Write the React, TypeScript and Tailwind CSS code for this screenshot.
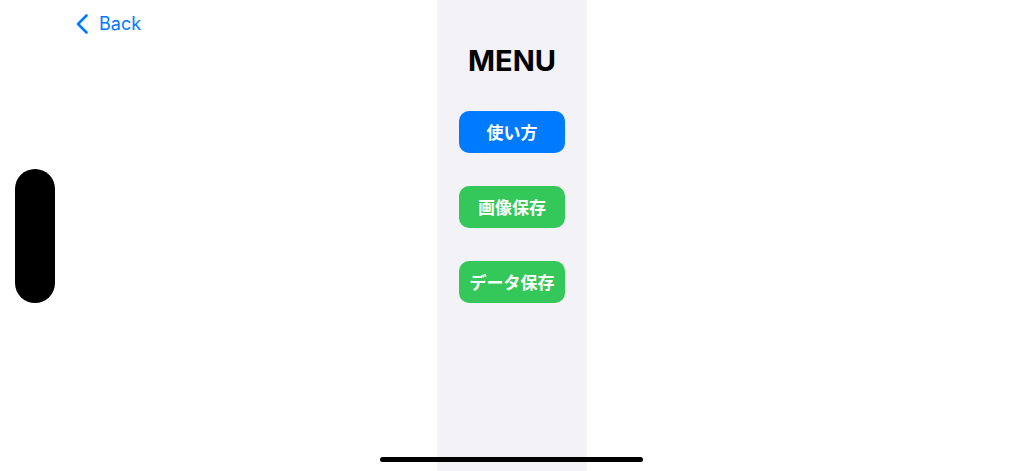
const items = [
  { label: "使い方", color: "bg-[#007aff]" },
  { label: "画像保存", color: "bg-[#34c759]" },
  { label: "データ保存", color: "bg-[#34c759]" },
];

export default function App() {
  return (
    <div className="relative flex h-[471px] w-full overflow-hidden bg-white font-['Inter','Noto_Sans_CJK_JP',sans-serif]">
      {/* left side */}
      <div className="relative flex w-[437px] shrink-0 items-center pl-[15px]">
        <button className="absolute left-[75px] top-[12px] flex items-center gap-[10px] text-[18px] leading-[24px] text-[#007aff]">
          <svg width="14" height="22" viewBox="0 0 14 22" fill="none">
            <path d="M11.5 2.5 L3 11 L11.5 19.5" stroke="currentColor" strokeWidth="2.6" strokeLinecap="round" strokeLinejoin="round" />
          </svg>
          <span>Back</span>
        </button>
        <div className="h-[134px] w-[40px] rounded-full bg-black" />
      </div>

      {/* menu panel */}
      <div className="flex w-[150px] shrink-0 flex-col items-center bg-[#f2f2f7] pt-[44px]">
        <h1 className="text-[29px] font-bold leading-[34px] text-black">MENU</h1>
        <div className="mt-[33px] flex flex-col gap-[33px]">
          {items.map((it) => (
            <button
              key={it.label}
              className={`flex h-[42px] w-[106px] items-center justify-center rounded-[10px] ${it.color} text-[17px] font-bold text-white font-['Noto_Sans_CJK_JP',sans-serif]`}
            >
              {it.label}
            </button>
          ))}
        </div>
      </div>

      <div className="flex-1" />

      {/* home indicator */}
      <div className="absolute bottom-[9px] left-[380px] h-[5px] w-[263px] rounded-full bg-black" />
    </div>
  );
}
